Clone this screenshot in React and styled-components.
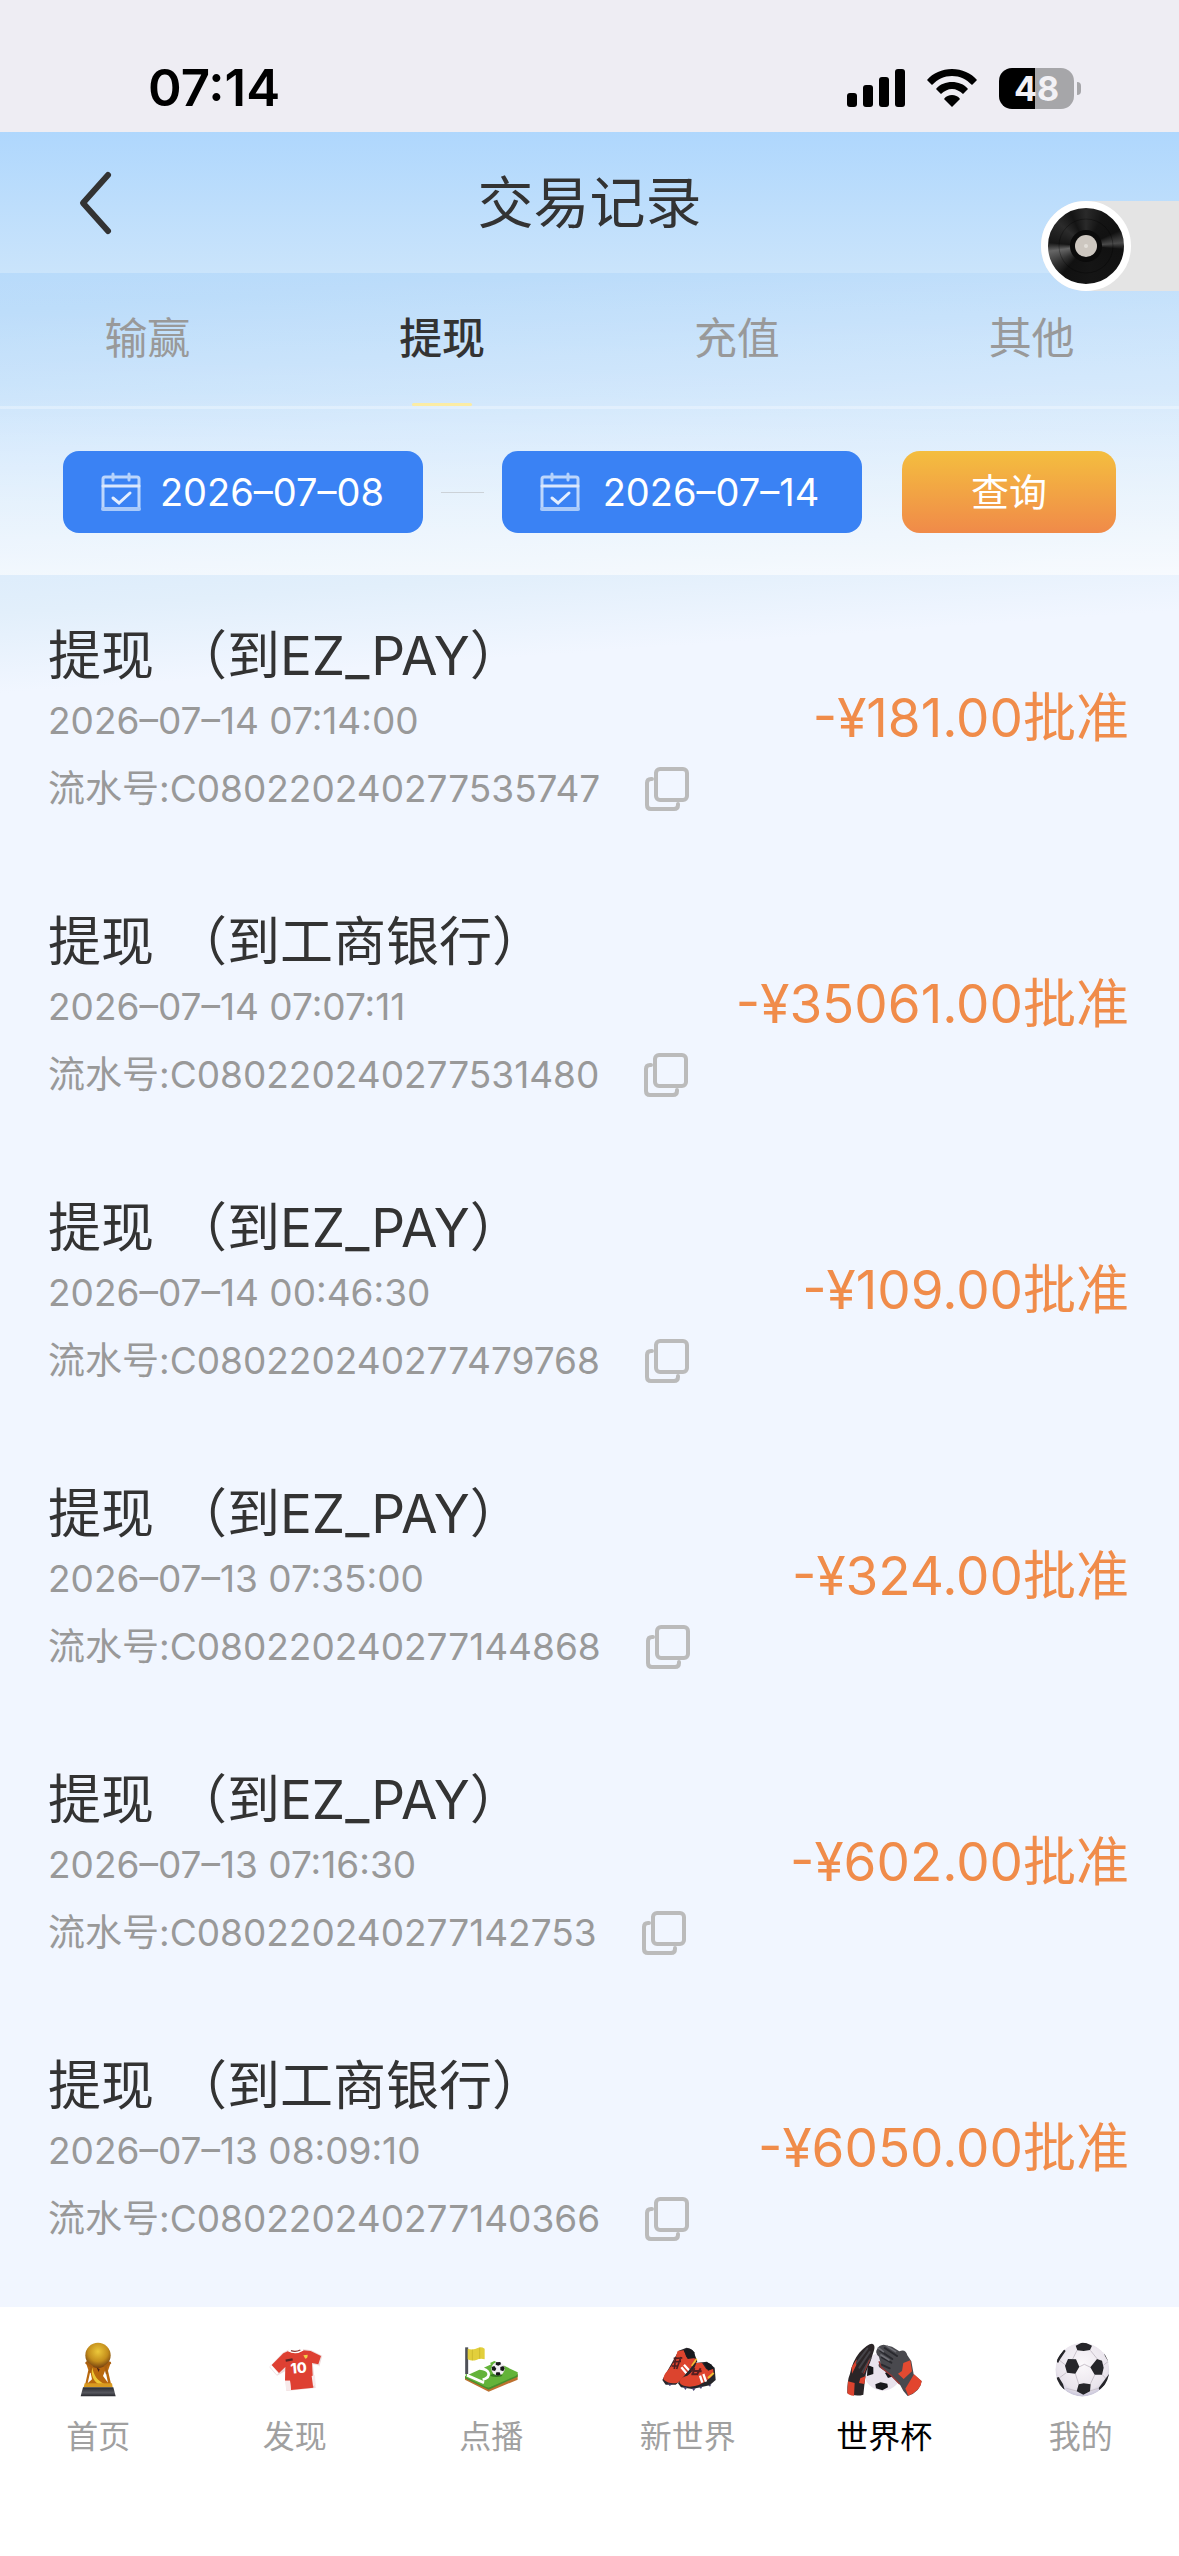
import React, { useState } from "react";
import styled, { createGlobalStyle } from "styled-components";

const TABS = ["输赢", "提现", "充值", "其他"];

const RECORDS = [
  { target: "EZ_PAY", time: "2026–07–14 07:14:00", serial: "C080220240277535747", amount: "-¥181.00" },
  { target: "工商银行", time: "2026–07–14 07:07:11", serial: "C080220240277531480", amount: "-¥35061.00" },
  { target: "EZ_PAY", time: "2026–07–14 00:46:30", serial: "C080220240277479768", amount: "-¥109.00" },
  { target: "EZ_PAY", time: "2026–07–13 07:35:00", serial: "C080220240277144868", amount: "-¥324.00" },
  { target: "EZ_PAY", time: "2026–07–13 07:16:30", serial: "C080220240277142753", amount: "-¥602.00" },
  { target: "工商银行", time: "2026–07–13 08:09:10", serial: "C080220240277140366", amount: "-¥6050.00" },
];

const NAV_ITEMS = [
  { label: "首页", Icon: TrophyIcon },
  { label: "发现", Icon: ShirtIcon },
  { label: "点播", Icon: PitchIcon },
  { label: "新世界", Icon: BootsIcon },
  { label: "世界杯", Icon: GlovesIcon, active: true },
  { label: "我的", Icon: BallIcon },
];

function App() {
  const [tab, setTab] = useState("提现");

  return (
    <StPage>
      <GlobalStyle />
      <StatusBar />
      <StBody>
        <StHeader>
          <StBackBtn type="button" aria-label="返回">
            <svg width="36" height="66" viewBox="0 0 36 66" fill="none">
              <path
                d="M30 5 L5 33 L30 61"
                stroke="#333"
                strokeWidth="6"
                strokeLinecap="round"
                strokeLinejoin="round"
              />
            </svg>
          </StBackBtn>
          <StTitle>交易记录</StTitle>
        </StHeader>
        <StMusicBtn type="button" aria-label="音乐">
          <VinylIcon />
        </StMusicBtn>
        <StPanel>
          <StTabs role="tablist">
            {TABS.map((name) => (
              <StTab
                key={name}
                type="button"
                role="tab"
                aria-selected={tab === name}
                $active={tab === name}
                onClick={() => setTab(name)}
              >
                {name}
              </StTab>
            ))}
          </StTabs>
          <StFilter>
            <StDateBtn type="button">
              <CalendarIcon />
              <StDateText>2026–07–08</StDateText>
            </StDateBtn>
            <StDash />
            <StDateBtn type="button">
              <CalendarIcon />
              <StDateText>2026–07–14</StDateText>
            </StDateBtn>
            <StQueryBtn type="button">查询</StQueryBtn>
          </StFilter>
        </StPanel>
        <StList>
          {RECORDS.map((item) => (
            <StRow key={item.serial}>
              <div>
                <StRowTitle>
                  <span>提现</span>
                  <span>（到{item.target}）</span>
                </StRowTitle>
                <StRowTime>{item.time}</StRowTime>
                <StRowSerial>
                  <span>流水号:{item.serial}</span>
                  <StCopyBtn type="button" aria-label="复制">
                    <CopyIcon />
                  </StCopyBtn>
                </StRowSerial>
              </div>
              <StAmount>{item.amount}批准</StAmount>
            </StRow>
          ))}
        </StList>
      </StBody>
      <StNav>
        {NAV_ITEMS.map(({ label, Icon, active }) => (
          <StNavLink key={label} href="#" $active={active}>
            <Icon />
            {label}
          </StNavLink>
        ))}
      </StNav>
    </StPage>
  );
}
export default App;

function StatusBar() {
  return (
    <StStatusBar>
      <StClock>07:14</StClock>
      <StStatusIcons>
        <svg width="58" height="38" viewBox="0 0 58 38">
          <rect x="0" y="24" width="10" height="14" rx="3" />
          <rect x="16" y="16" width="10" height="22" rx="3" />
          <rect x="32" y="8" width="10" height="30" rx="3" />
          <rect x="48" y="0" width="10" height="38" rx="3" />
        </svg>
        <svg width="50" height="38" viewBox="0 0 50 38">
          <path d="M25 0 C35 0 44 4 50 11 L45 16 C39 10 33 7 25 7 C17 7 11 10 5 16 L0 11 C6 4 15 0 25 0Z" />
          <path d="M25 13 C31 13 37 15 41 20 L36 25 C33 22 29 20 25 20 C21 20 17 22 14 25 L9 20 C13 15 19 13 25 13Z" />
          <path d="M25 26 C28 26 31 27 33 30 L25 38 L17 30 C19 27 22 26 25 26Z" />
        </svg>
        <StBattery>
          <StBatteryBody>48</StBatteryBody>
          <StBatteryTip />
        </StBattery>
      </StStatusIcons>
    </StStatusBar>
  );
}

function CalendarIcon() {
  return (
    <svg width="40" height="40" viewBox="0 0 40 40" fill="none" strokeLinecap="round">
      <rect x="2" y="5" width="36" height="32" rx="2" stroke="#bcd6fc" strokeWidth="3" />
      <path d="M2 37 H38" stroke="#a9cafa" strokeWidth="4" />
      <path d="M2 14 H38" stroke="#dbe8fd" strokeWidth="3" />
      <path d="M12 2 V8 M28 2 V8" stroke="#b4d1fb" strokeWidth="3" />
      <path d="M12 26 L18 31 L29 21" stroke="#e4eefe" strokeWidth="3" />
    </svg>
  );
}

function CopyIcon() {
  return (
    <svg width="46" height="46" viewBox="0 0 46 46" fill="none" stroke="#bbb" strokeWidth="4">
      <rect x="12" y="3" width="31" height="31" rx="4" />
      <path d="M8 13 H7 Q3 13 3 17 V39 Q3 43 7 43 H30 Q34 43 34 39 V38" strokeLinecap="round" />
    </svg>
  );
}

function VinylIcon() {
  return (
    <svg width="76" height="76" viewBox="0 0 76 76">
      <circle cx="38" cy="38" r="27" fill="none" stroke="#000" strokeOpacity="0.3" />
      <circle cx="38" cy="38" r="16" fill="#0b0b0b" />
      <circle cx="38" cy="38" r="11" fill="#cdc7c0" />
      <circle cx="38" cy="38" r="2" fill="#e2ded9" />
    </svg>
  );
}

function TrophyIcon() {
  return (
    <StNavIcon viewBox="175 117 240 180">
      <defs>
        <radialGradient id="gold" cx="0.5" cy="0.35" r="0.65">
          <stop offset="0" stopColor="#ecc83a" />
          <stop offset="0.6" stopColor="#c48e1c" />
          <stop offset="1" stopColor="#744010" />
        </radialGradient>
        <linearGradient id="plinth" x1="0" y1="0" x2="0" y2="1">
          <stop offset="0" stopColor="#2a2b30" />
          <stop offset="0.6" stopColor="#56575e" />
          <stop offset="1" stopColor="#25262b" />
        </linearGradient>
      </defs>
      <path d="M258 186 L272 182 L320 182 L334 186 L325 212 L335 256 L256 256 L266 210Z" fill="#b9690e" />
      <path d="M272 214 L277 238 L264 250Z M317 210 L325 248 L310 228Z" fill="#fff" />
      <circle cx="295" cy="166" r="38" fill="url(#gold)" />
      <path d="M258 187 L277 200 L270 218 M333 187 L317 199 L322 222" stroke="#a85f10" strokeWidth="7" fill="none" />
      <path d="M278 202 C281 226 294 244 318 254 L302 256 C282 246 272 226 278 202Z" fill="#edc634" />
      <path d="M291 203 L300 207 L297 216Z" fill="#4a1e12" />
      <path d="M255 250 H337 L339 262 H252Z" fill="#d99a20" />
      <path d="M250 262 H341 L348 289 H243Z" fill="url(#plinth)" />
    </StNavIcon>
  );
}

function ShirtIcon() {
  return (
    <StNavIcon viewBox="764 117 240 180">
      <path d="M847 158 L864 149 Q886 160 907 147 L933 151 L966 167 L957 200 L938 196 L946 264 L858 273 L854 214 L830 227 L807 201Z" fill="#efdddd" />
      <path d="M849 160 L864 153 Q887 166 909 151 L931 153 L962 168 L954 193 L935 189 L939 263 L872 270 L869 242 L854 242 L855 201 L836 219 L814 195Z" fill="#de4032" />
      <path d="M811 198 L832 222" stroke="#fff" strokeWidth="6" />
      <path d="M938 196 L957 200" stroke="#fff" strokeWidth="6" />
      <path d="M864 151 Q886 163 908 149" stroke="#fff" strokeWidth="6" fill="none" />
      <path d="M872 152 Q886 157 900 150" stroke="#8e3732" strokeWidth="4" fill="none" />
      <path d="M854 242 L869 242 L872 270 L858 272Z M934 228 L944 226 L946 254 L938 258Z" fill="#f7eaeb" />
      <path d="M856 182 L877 178" stroke="#5b2524" strokeWidth="7" />
      <path d="M909 166 L922 164 Q923 174 915 176Z" fill="#f1cf48" />
      <text
        x="895"
        y="219"
        textAnchor="middle"
        transform="rotate(-5 895 205)"
        fontFamily="Inter, sans-serif"
        fontWeight="800"
        fontSize="43"
        fill="#fff"
      >
        10
      </text>
    </StNavIcon>
  );
}

function PitchIcon() {
  return (
    <StNavIcon viewBox="154 117 240 180">
      <path d="M196 228 L267 262 L354 222 V239 L267 275 L196 239Z" fill="#bd7130" />
      <path d="M196 228 L267 262 L354 222 V230 L267 269 L196 235Z" fill="#468f2d" />
      <path d="M198 222 L284 183 L354 217 Q356 224 348 228 L270 262 Q264 263 258 260 L198 232Z" fill="#63b339" />
      <path d="M201 222 L272 190 M202 226 L253 248 M240 205 C270 207 278 230 249 239" stroke="#fff" strokeWidth="8" fill="none" />
      <path d="M201 142 V222" stroke="#4f5158" strokeWidth="9" />
      <path d="M204 146 Q220 152 236 143 Q246 140 255 146 V178 Q242 174 230 180 Q216 184 204 178Z" fill="#e2cf3c" />
      <path d="M218 149 V181 M240 143 V176" stroke="#cdbb2e" strokeWidth="3" />
      <ellipse cx="290" cy="226" rx="18" ry="5" fill="#33761e" />
      <circle cx="295" cy="206" r="20" fill="#f0edf1" />
      <path
        d="M289 187 L302 186 L304 193 L296 197 L288 194Z M276 201 L284 198 L290 206 L286 213 L277 211Z M302 201 L311 198 L315 205 L311 214 L302 211Z M290 217 L300 217 L303 224 L295 227 L288 224Z"
        fill="#17171a"
      />
    </StNavIcon>
  );
}

function BootsIcon() {
  return (
    <StNavIcon viewBox="743 117 240 180">
      <path d="M835 152 L859 143 Q880 145 884 166 L891 184 L866 222 L826 254 L796 254 L786 240Z" fill="#29262b" />
      <path d="M832 153 L851 151 L858 172 L874 170 L886 177 Q890 193 867 211 Q849 236 832 248 Q808 254 790 239 Q786 228 804 209 Q822 190 832 153Z" fill="#dc442e" />
      <path d="M850 151 Q869 139 882 157 L884 174 L862 177Z" fill="#191a1e" />
      <path d="M820 175 L846 174 M818 186 L842 184 M814 198 L834 198 M826 171 L822 207 M842 171 L829 207" stroke="#501e20" strokeWidth="5" />
      <path d="M843 202 L858 220 M851 194 L868 213" stroke="#fff" strokeWidth="7" />
      <path d="M889 176 L874 198" stroke="#f0bf34" strokeWidth="5" />
      <path d="M833 250 L884 189 L920 185 L943 203 L946 240 L928 256 L876 267 L842 262Z" fill="#25252a" />
      <path d="M888 189 L905 188 L918 208 L938 207 Q944 225 924 238 Q900 259 868 260 Q844 260 837 247 Q839 232 861 227 Q880 215 888 189Z" fill="#df442e" />
      <path d="M911 189 Q935 186 939 206 L923 212Z" fill="#17181c" />
      <path d="M871 211 L904 214 M873 223 L894 223 M882 204 L877 224 M901 205 L889 225" stroke="#551e20" strokeWidth="6" />
      <path d="M899 227 L906 248 M909 222 L917 245" stroke="#fff" strokeWidth="7" />
      <path d="M940 219 L923 234" stroke="#f0bf34" strokeWidth="6" />
      <path d="M802 250 L808 258 L816 253Z M849 260 L855 270 L861 262Z M874 264 L880 273 L886 265Z M896 260 L902 267 L907 258Z M924 255 L929 260 L933 253Z" fill="#45416b" />
    </StNavIcon>
  );
}

function GlovesIcon() {
  return (
    <StNavIcon viewBox="193 117 240 180">
      <circle cx="309" cy="215" r="57" fill="#e9e3ed" />
      <path d="M264 195 L281 202 L281 222 L262 228Z M287 253 L303 247 L323 251 L325 262 L308 271 L289 265Z M316 219 L332 211 L341 229 L325 234Z" fill="#18171b" />
      <path d="M277 131 Q288 134 283 151 L271 188 Q259 210 256 237 L251 284 Q229 291 203 280 Q202 242 211 221 Q218 184 239 158 Q264 131 277 131Z" fill="#2b2527" />
      <path d="M216 202 L231 178 L230 195 L217 221Z M205 244 L225 249 L223 287 Q206 286 203 278Z M242 235 L258 228 L254 252 L238 249Z" fill="#dc432e" />
      <path d="M231 189 L263 146 M239 203 L270 156 M248 216 L272 176" stroke="#454348" strokeWidth="6" strokeLinecap="round" />
      <path d="M270 179 L252 221" stroke="#a13630" strokeWidth="3" />
      <path d="M293 146 Q297 135 312 134 L337 140 L359 154 Q378 146 383 166 L395 184 L402 223 L426 244 Q421 277 384 288 Q368 272 362 256 L333 226 L299 202 Q293 194 302 187 L298 170 Q284 157 293 146Z" fill="#49494e" />
      <path d="M302 153 L338 177 M315 144 L352 168 M307 172 L335 188 M306 194 L330 205" stroke="#29292e" strokeWidth="6" strokeLinecap="round" />
      <path d="M296 144 L311 155 M323 139 L348 155 M304 165 L328 180" stroke="#707077" strokeWidth="5" strokeLinecap="round" />
      <path d="M371 189 L392 181 L397 214 L372 237 L355 221 L367 213Z" fill="#e34a31" />
      <path d="M403 223 L426 243 Q425 270 386 287 L377 266Z" fill="#e2452e" />
      <path d="M298 184 L304 202 L334 226 L360 252" stroke="#953634" strokeWidth="4" fill="none" />
    </StNavIcon>
  );
}

function BallIcon() {
  return (
    <StNavIcon viewBox="782 117 240 180">
      <defs>
        <radialGradient id="ball" cx="0.5" cy="0.4" r="0.6">
          <stop offset="0" stopColor="#fbf8fb" />
          <stop offset="0.8" stopColor="#e9e4ec" />
          <stop offset="1" stopColor="#c6c3d8" />
        </radialGradient>
        <clipPath id="ballClip">
          <circle cx="906" cy="209" r="81" />
        </clipPath>
      </defs>
      <g clipPath="url(#ballClip)">
        <circle cx="906" cy="209" r="81" fill="url(#ball)" />
        <path
          d="M890 151 L877 177 M930 151 L951 177 M896 201 L912 193 L931 202 M885 221 L895 252 M943 225 L930 252 M854 194 L835 179 M858 218 L835 235 M969 196 L984 184 M965 223 L978 237 M889 273 L858 265 M928 273 L954 265"
          stroke="#c9c2cb"
          strokeWidth="3"
          fill="none"
        />
        <path
          d="M886 137 L910 125 L935 137 L929 150 L910 153 L891 151Z M863 177 L887 178 L897 200 L885 221 L860 218 L854 197Z M950 177 L965 182 L970 203 L965 224 L943 224 L930 202Z M895 253 L910 250 L931 253 L929 274 L909 284 L889 274Z M824 235 L835 231 L848 252 L853 269 L835 258Z M827 181 L851 148 L856 153 L838 180 L833 190Z M981 229 L990 217 L981 249 L957 270 L955 264Z M969 154 L989 181 L986 188 L974 168Z"
          fill="#26262a"
        />
      </g>
    </StNavIcon>
  );
}

const GlobalStyle = createGlobalStyle`
  * {
    box-sizing: border-box;
  }
  body {
    margin: 0;
    font-family: Inter, "Noto Sans CJK SC", sans-serif;
    color: #333;
  }
  button {
    padding: 0;
    border: none;
    background: none;
    font: inherit;
    color: inherit;
    cursor: pointer;
  }
  svg {
    display: block;
    flex-shrink: 0;
  }
`;
const StPage = styled.div`
  display: flex;
  flex-direction: column;
  min-height: 100vh;
`;
const StStatusBar = styled.div`
  display: flex;
  justify-content: space-between;
  align-items: center;
  height: 132px;
  padding: 44px 98px 0 148px;
  background-color: #eeedf3;
  color: #000;
`;
const StClock = styled.span`
  font-size: 51px;
  font-weight: 600;
  line-height: 60px;
`;
const StStatusIcons = styled.div`
  display: flex;
  align-items: center;
  gap: 22px;
`;
const StBattery = styled.div`
  display: flex;
  align-items: center;
  gap: 3px;
`;
const StBatteryBody = styled.div`
  width: 75px;
  height: 41px;
  border-radius: 13px;
  background: linear-gradient(90deg, #000 48%, #a6a6a9 48%);
  color: #f2f1f6;
  font-size: 34px;
  font-weight: 700;
  line-height: 41px;
  text-align: center;
`;
const StBatteryTip = styled.div`
  width: 4px;
  height: 13px;
  border-radius: 0 4px 4px 0;
  background-color: #a6a6a9;
`;
const StBody = styled.main`
  position: relative;
  flex: 1;
  background: linear-gradient(
    176deg,
    #afd7fd 0,
    #bbdcfa 180px,
    #cfe6fc 320px,
    #e2effb 480px,
    #f1f6ff 560px
  );
`;
const StHeader = styled.header`
  display: grid;
  grid-template-columns: 120px 1fr 120px;
  align-items: center;
  height: 141px;
  padding: 0 36px;
  background: linear-gradient(#afd7fd, #cae4fb);
`;
const StBackBtn = styled.button`
  display: flex;
  justify-content: center;
`;
const StTitle = styled.h1`
  margin: 0;
  font-size: 56px;
  font-weight: 400;
  line-height: 72px;
  text-align: center;
`;
/* 悬浮在右侧的音乐开关 */
const StMusicBtn = styled.button`
  position: absolute;
  top: 69px;
  right: 0;
  display: flex;
  width: 138px;
  height: 90px;
  border-radius: 45px 0 0 45px;
  background-color: #e4e4e4;

  svg {
    box-sizing: content-box;
    border: 7px solid #fff;
    border-radius: 50%;
    background: conic-gradient(
      #2a2a2a,
      #141414 30deg,
      #111 65deg,
      #4a4a4a 85deg,
      #111 95deg,
      #151515 170deg,
      #111 220deg,
      #333 240deg,
      #666 262deg,
      #161616 275deg,
      #2b2b2b 310deg,
      #141414 335deg,
      #2a2a2a
    );
  }
`;
const StPanel = styled.section`
  background: linear-gradient(
    rgba(255, 255, 255, 0),
    rgba(255, 255, 255, 0.1) 40%,
    rgba(255, 255, 255, 0.6)
  );
`;
const StTabs = styled.div`
  display: grid;
  grid-template-columns: repeat(4, 1fr);
  border-bottom: 3px solid rgba(255, 255, 255, 0.3);
`;
const StTab = styled.button`
  display: flex;
  flex-direction: column;
  align-items: center;
  justify-content: space-between;
  height: 133px;
  font-size: 43px;
  font-weight: ${({ $active }) => ($active ? 500 : 400)};
  line-height: 130px;
  color: ${({ $active }) => ($active ? "#333" : "#999")};

  &::after {
    content: "";
    width: 60px;
    height: 3px;
    border-radius: 2px;
    background-color: ${({ $active }) => ($active ? "#fbeca4" : "transparent")};
  }
`;
const StFilter = styled.div`
  display: flex;
  align-items: center;
  padding: 42px 63px;
`;
const StDateBtn = styled.button`
  display: flex;
  flex: 1;
  align-items: center;
  height: 82px;
  padding: 0 20px 0 38px;
  border-radius: 16px;
  background-color: #3a82f4;
  color: #fff;
`;
const StDateText = styled.span`
  flex: 1;
  font-size: 38px;
  line-height: 48px;
  text-align: center;
`;
const StDash = styled.div`
  width: 43px;
  height: 1px;
  margin: 0 18px;
  background-color: #ccd2d8;
`;
const StQueryBtn = styled.button`
  width: 214px;
  height: 82px;
  margin-left: 40px;
  border-radius: 18px;
  background: linear-gradient(#f4be3f, #f08a49);
  color: #fff;
  font-size: 38px;
  line-height: 48px;
`;
const StList = styled.ul`
  margin: 0;
  padding: 0;
  list-style: none;
`;
const StRow = styled.li`
  display: flex;
  justify-content: space-between;
  align-items: center;
  height: 286px;
  padding: 0 50px 0 48px;
`;
const StRowTitle = styled.h2`
  display: flex;
  gap: 20px;
  margin: 0;
  padding-top: 12px;
  font-size: 53px;
  font-weight: 400;
  line-height: 64px;
`;
const StRowTime = styled.p`
  margin: 0;
  font-size: 37px;
  line-height: 66px;
  color: #999;
`;
const StRowSerial = styled.div`
  display: flex;
  align-items: center;
  gap: 44px;
  font-size: 37px;
  line-height: 70px;
  color: #999;
`;
const StCopyBtn = styled.button`
  display: flex;
`;
const StAmount = styled.strong`
  font-size: 53px;
  font-weight: 400;
  line-height: 64px;
  color: #f08c4a;
`;
const StNav = styled.nav`
  display: grid;
  grid-template-columns: repeat(6, 1fr);
  height: 249px;
  padding-top: 32px;
  background-color: #fff;
`;
const StNavLink = styled.a`
  display: flex;
  flex-direction: column;
  align-items: center;
  gap: 14px;
  font-size: 32px;
  line-height: 48px;
  color: ${({ $active }) => ($active ? "#000" : "#a0a0a0")};
  text-decoration: none;
`;
const StNavIcon = styled.svg`
  width: 80px;
  height: 60px;
`;
